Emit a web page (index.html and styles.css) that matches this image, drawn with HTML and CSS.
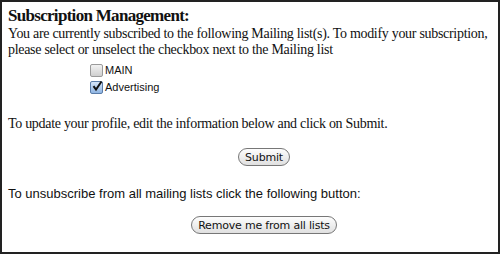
FILE: index.html
```html
<!DOCTYPE html>
<html>
<head>
<meta charset="utf-8">
<link rel="stylesheet" href="styles.css">
</head>
<body>
<div class="frame">
  <h1 class="title">Subscription Management:</h1>
  <p class="intro">You are currently subscribed to the following Mailing list(s). To modify your subscription, please select or unselect the checkbox next to the Mailing list</p>
  <div class="lists">
    <label class="item"><span class="box"></span>MAIN</label>
    <label class="item"><span class="box checked"><svg viewBox="0 0 12 12" width="12" height="12"><path d="M2.5 6.2 L5 9.5 L10.5 1.5" fill="none" stroke="#111" stroke-width="2"/></svg></span>Advertising</label>
  </div>
  <p class="update">To update your profile, edit the information below and click on Submit.</p>
  <div class="center"><button class="btn">Submit</button></div>
  <p class="unsub">To unsubscribe from all mailing lists click the following button:</p>
  <div class="center"><button class="btn btn-remove">Remove me from all lists</button></div>
</div>
</body>
</html>
```
FILE: styles.css
```css
html, body { margin: 0; padding: 0; background: #fff; }
.frame {
  width: 500px; height: 254px; box-sizing: border-box;
  border: 2px solid #222;
  padding: 3px 6px 0 6px;
  font-family: "Liberation Serif", "Times New Roman", serif;
  color: #111;
}
.title { font-size: 17px; letter-spacing: -0.7px; font-weight: bold; margin: 0; line-height: 21px; }
.intro { font-size: 14px; letter-spacing: -0.3px; line-height: 16px; margin: 0; }
.lists { display: flex; flex-direction: column; gap: 4px; padding: 6px 0 0 82px; }
.item { display: flex; align-items: center; gap: 2px; font-family: "Liberation Sans", Arial, sans-serif; font-size: 11px; line-height: 13px; }
.box { width: 11px; height: 11px; border: 1px solid #9a9a9a; border-radius: 2px; background: linear-gradient(#f2f2f2, #cfcfcf); position: relative; }
.box.checked { background: linear-gradient(#d5e5f8, #8fb5e3); border-color: #5a7ca8; }
.box svg { position: absolute; left: 0; top: -2px; }
.update { font-size: 14px; letter-spacing: -0.3px; line-height: 16px; margin: 22px 0 0 0; }
.center { display: flex; justify-content: center; padding-left: 28px; }
.btn {
  font-family: "DejaVu Sans", "Liberation Sans", sans-serif; font-size: 11px; letter-spacing: -0.2px;
  border: 1px solid #777; border-radius: 9px; height: 18px; padding: 0 6px;
  background: linear-gradient(#fdfdfd, #e0e0e0); color: #111; margin-top: 16px;
}
.btn-remove { margin-top: 14px; }
.unsub { font-family: "Liberation Sans", Arial, sans-serif; font-size: 13px; line-height: 16px; margin: 20px 0 0 0; }
```
